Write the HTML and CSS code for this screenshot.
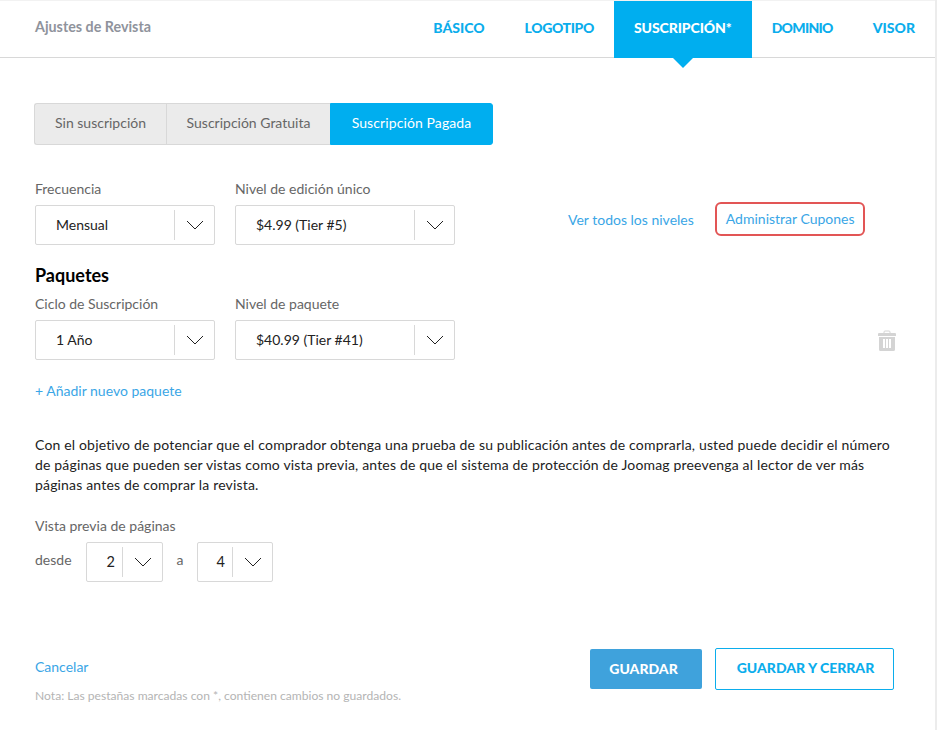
FILE: index.html
```html
<!DOCTYPE html>
<html lang="es">
<head>
<meta charset="utf-8">
<title>Ajustes de Revista</title>
<link rel="stylesheet" href="styles.css">
</head>
<body>
<div class="page">
  <header class="topbar">
    <div class="title">Ajustes de Revista</div>
    <nav class="tabs">
      <a class="tab">BÁSICO</a>
      <a class="tab tight-a">LOGOTIPO</a>
      <a class="tab active">SUSCRIPCIÓN*</a>
      <a class="tab tight-b">DOMINIO</a>
      <a class="tab">VISOR</a>
    </nav>
  </header>
  <main class="content">
    <div class="segments">
      <div class="seg seg-one">Sin suscripción</div>
      <div class="seg seg-two">Suscripción Gratuita</div>
      <div class="seg seg-three">Suscripción Pagada</div>
    </div>

    <div class="row row-freq">
      <div class="field">
        <label class="label">Frecuencia</label>
        <div class="select w180"><span class="val">Mensual</span><span class="arrow"><svg width="18" height="10" viewBox="0 0 18 10"><path d="M1 1l8 8 8-8" fill="none" stroke="#222" stroke-width="1"/></svg></span></div>
      </div>
      <div class="field">
        <label class="label">Nivel de edición único</label>
        <div class="select w220"><span class="val">$4.99 (Tier #5)</span><span class="arrow"><svg width="18" height="10" viewBox="0 0 18 10"><path d="M1 1l8 8 8-8" fill="none" stroke="#222" stroke-width="1"/></svg></span></div>
      </div>
      <div class="links">
        <a class="link">Ver todos los niveles</a>
        <a class="link coupon">Administrar Cupones</a>
      </div>
    </div>

    <h2 class="heading">Paquetes</h2>
    <div class="row row-pack">
      <div class="field">
        <label class="label">Ciclo de Suscripción</label>
        <div class="select w180"><span class="val">1 Año</span><span class="arrow"><svg width="18" height="10" viewBox="0 0 18 10"><path d="M1 1l8 8 8-8" fill="none" stroke="#222" stroke-width="1"/></svg></span></div>
      </div>
      <div class="field">
        <label class="label">Nivel de paquete</label>
        <div class="select w220"><span class="val">$40.99 (Tier #41)</span><span class="arrow"><svg width="18" height="10" viewBox="0 0 18 10"><path d="M1 1l8 8 8-8" fill="none" stroke="#222" stroke-width="1"/></svg></span></div>
      </div>
      <svg class="trash" width="18" height="21" viewBox="0 0 18 21">
        <path d="M6 3V2a1 1 0 0 1 1-1h4a1 1 0 0 1 1 1v1" fill="none" stroke="#d4d4d4" stroke-width="1"/>
        <path d="M1 3h16a1 1 0 0 1 1 1v2H0V4a1 1 0 0 1 1-1z" fill="#d4d4d4"/>
        <path fill-rule="evenodd" d="M1 7h16v12.500a1.500 1.500 0 0 1-1.500 1.500h-13A1.500 1.500 0 0 1 1 19.500V7zM5 9v9h2V9zM8 9v9h2V9zM11 9v9h2V9z" fill="#d4d4d4"/>
      </svg>
    </div>
    <a class="link add">+ Añadir nuevo paquete</a>

    <p class="desc">Con el objetivo de potenciar que el comprador obtenga una prueba de su publicación antes de comprarla, usted puede decidir el número de páginas que pueden ser vistas como vista previa, antes de que el sistema de protección de Joomag preevenga al lector de ver más páginas antes de comprar la revista.</p>

    <div class="label preview-label">Vista previa de páginas</div>
    <div class="preview">
      <span class="label inline from">desde</span>
      <div class="select small w77"><span class="val num">2</span><span class="arrow"><svg width="18" height="10" viewBox="0 0 18 10"><path d="M1 1l8 8 8-8" fill="none" stroke="#222" stroke-width="1"/></svg></span></div>
      <span class="label inline to">a</span>
      <div class="select small w76"><span class="val num">4</span><span class="arrow"><svg width="18" height="10" viewBox="0 0 18 10"><path d="M1 1l8 8 8-8" fill="none" stroke="#222" stroke-width="1"/></svg></span></div>
    </div>

    <footer class="footer">
      <div class="foot-left">
        <a class="link cancel">Cancelar</a>
        <div class="note">Nota: Las pestañas marcadas con *, contienen cambios no guardados.</div>
      </div>
      <div class="buttons">
        <button class="btn primary">GUARDAR</button>
        <button class="btn outline">GUARDAR Y CERRAR</button>
      </div>
    </footer>
  </main>
</div>
</body>
</html>
```
FILE: styles.css
```css
* { box-sizing: border-box; }
html, body { margin: 0; padding: 0; height: 100%; background: #fff; overflow: hidden; }
body { font-family: "Lato", "Liberation Sans", sans-serif; color: #222; font-size: 14px; }
.page { width: 935px; height: 730px; border-top: 1px solid #f2f2f2; box-shadow: 2px 0 0 #ececec; }

.topbar { height: 57px; border-bottom: 1px solid #d8d8d8; display: flex; justify-content: space-between; padding-left: 35px; }
.title { font-size: 14.300px; font-weight: 700; color: #8f939c; line-height: 51px; }
.tabs { display: flex; height: 57px; }
.tab { position: relative; font-size: 14px; font-weight: 900; color: #0badec; line-height: 53px; padding: 0 20px; white-space: nowrap; }
.tight-a { letter-spacing: -0.38px; }
.tight-b { letter-spacing: -0.7px; }
.tab.active { background: #00aeef; color: #fff; letter-spacing: -0.09px; }
.tab.active::after { content: ""; position: absolute; left: 50%; bottom: -10px; margin-left: -10px; border: 10px solid transparent; border-bottom: 0; border-top-color: #00aeef; }

.content { padding: 45px 41px 0 35px; }

.segments { display: flex; width: 459px; height: 42px; margin-left: -1px; font-size: 14px; line-height: 38px; }
.seg { text-align: center; background: #ebebeb; color: #666; border: 1px solid #d8d8d8; }
.seg-one { width: 132px; border-radius: 3px 0 0 3px; border-right: 0; }
.seg-two { width: 164px; border-right: 0; }
.seg-three { width: 163px; background: #00aeef; border-color: #00aeef; color: #fff; border-radius: 0 3px 3px 0; letter-spacing: 0.1px; }

.row { display: flex; gap: 20px; }
.row-freq { margin-top: 36px; position: relative; }
.row-pack { margin-top: 10px; position: relative; }
.field { display: flex; flex-direction: column; }
.label { color: #666; font-size: 14px; line-height: 15px; }
.field .label { margin-bottom: 9px; }

.select { height: 40px; border: 1px solid #d8d8d8; border-radius: 2px; display: flex; align-items: center; justify-content: space-between; background: #fff; font-size: 14px; color: #222; }
.w180 { width: 180px; }
.w220 { width: 220px; }
.w77 { width: 77px; }
.w76 { width: 76px; }
.val { padding: 0 0 2px 20px; white-space: nowrap; }
.arrow { width: 40px; height: 30px; border-left: 1px solid #d8d8d8; display: flex; align-items: center; justify-content: center; }
.small .val { flex: 1; padding: 0 7px 2px 0; text-align: right; font-size: 14.500px; }
.small .arrow { width: 40px; flex: none; }

.link { color: #3aa6e6; font-size: 14px; white-space: nowrap; }
.links { display: flex; align-items: center; margin-left: 93px; margin-top: 21px; height: 34px; }
.links .link:first-child { margin-right: 21px; }
.coupon { border: 2px solid #e25555; border-radius: 6px; height: 34px; line-height: 29px; padding: 0 8px 0 9px; }

.heading { margin: 19px 0 0; font-size: 18px; line-height: 22px; font-weight: 700; color: #000; }
.trash { position: absolute; left: 843px; top: 34px; }
.add { display: block; margin-top: 23px; line-height: 15px; }

.desc { margin: 37px 0 0; font-size: 14px; letter-spacing: 0.17px; line-height: 20px; color: #222; width: 858px; }

.preview-label { margin-top: 23px; }
.preview { display: flex; align-items: center; margin-top: 9px; }
.inline { position: relative; top: -3px; }
.from { width: 51px; }
.to { width: 34px; text-align: center; }

.footer { display: flex; justify-content: space-between; margin-top: 66px; }
.foot-left { padding-top: 11px; }
.cancel { display: block; line-height: 15px; }
.note { margin-top: 15px; font-size: 12.100px; line-height: 14px; color: #b4b4b4; }
.buttons { display: flex; align-items: center; gap: 13px; height: 42px; }
.btn { font-family: inherit; font-weight: 900; font-size: 14px; border-radius: 2px; cursor: pointer; white-space: nowrap; }
.primary { width: 112px; height: 40px; background: #3fa2dc; border: 0; color: #fff; padding: 0 5px 2px 0; }
.outline { width: 179px; height: 42px; background: #fff; border: 1px solid #0badec; color: #0badec; padding: 0 0 3px 2px; }
```
